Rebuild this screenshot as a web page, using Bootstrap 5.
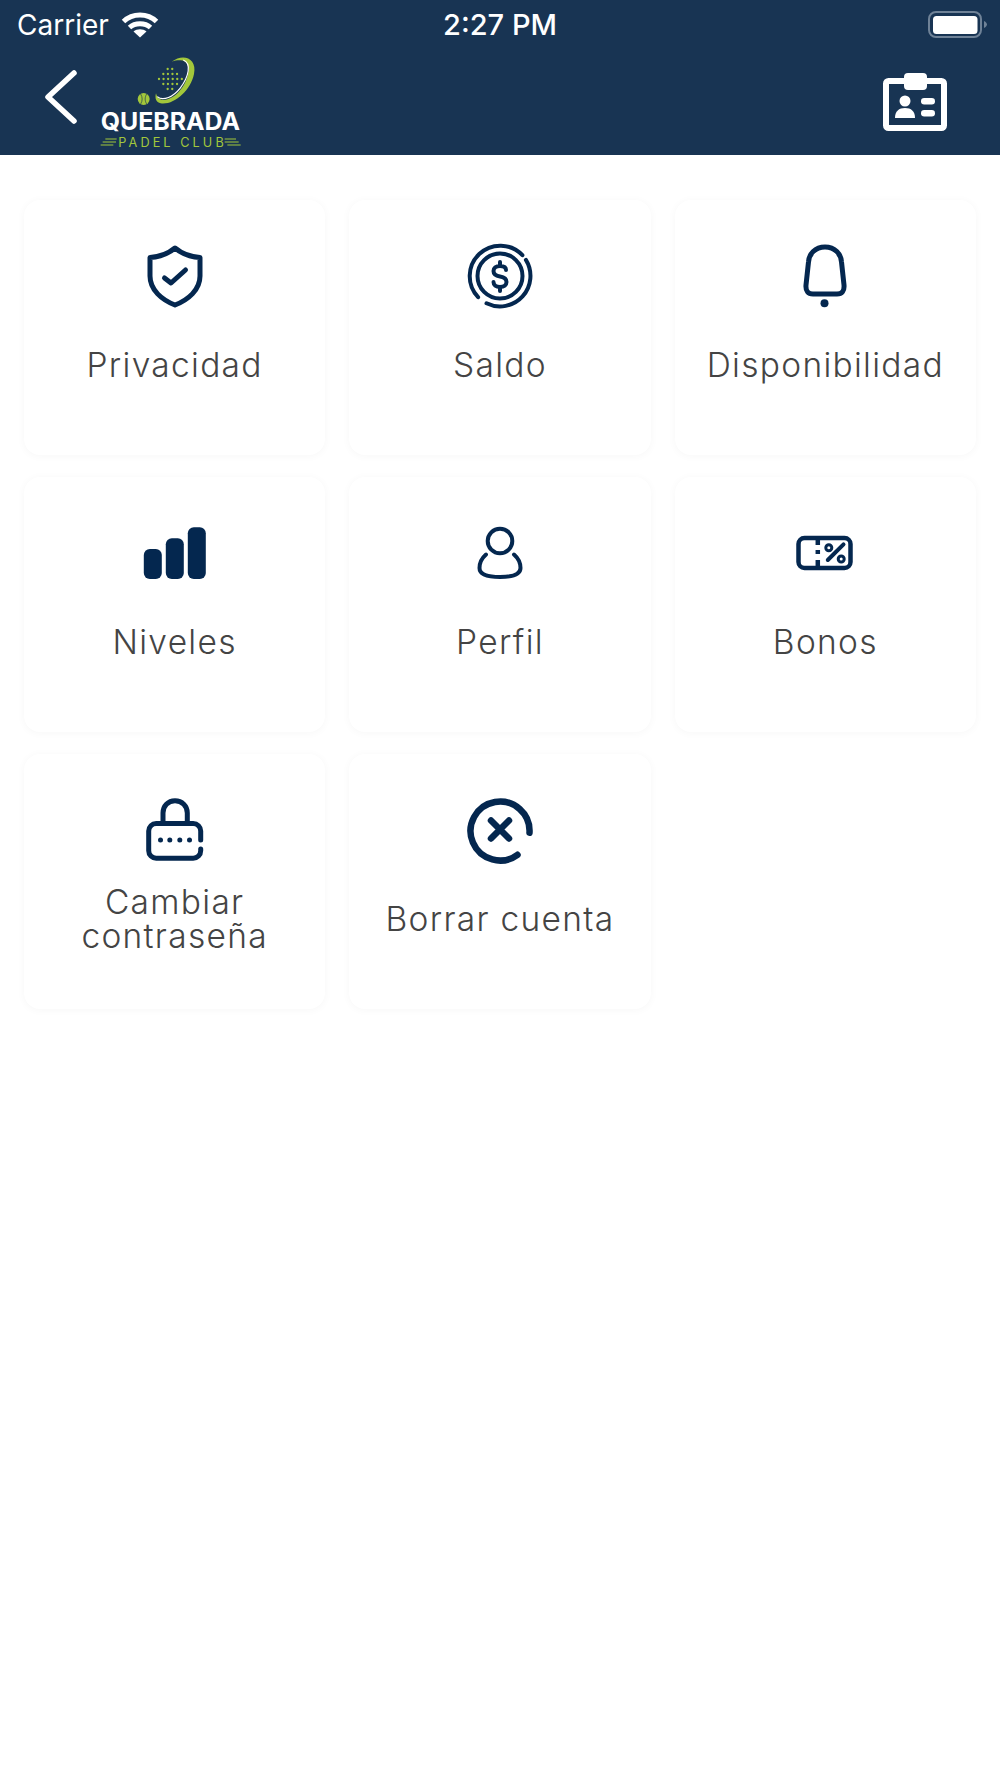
<!DOCTYPE html>
<html lang="es">
<head>
  <meta charset="UTF-8">
  <title>Quebrada Padel Club</title>
  <link href="https://cdn.jsdelivr.net/npm/bootstrap@5.3.0/dist/css/bootstrap.min.css" rel="stylesheet">
  <style>
    body {
      background: #fff;
      font-family: "Inter", "Liberation Sans", sans-serif;
    }

    .app-header {
      background: #183453;
      height: 155px;
      color: #fff;
    }

    .status-bar {
      height: 48px;
      padding: 2px 12px 0 17px;
      font-size: 28px;
    }

    .status-side {
      flex: 1 1 0;
    }

    .status-left {
      gap: 12px;
    }

    .status-time {
      margin-right: 5px;
      font-weight: 500;
      font-size: 29px;
    }

    .nav-bar {
      height: 107px;
      padding: 0 53px 0 40px;
    }

    .menu-grid {
      display: grid;
      grid-template-columns: repeat(3, 1fr);
      gap: 22px 24px;
      padding: 45px 24px;
    }

    .menu-tile {
      height: 255px;
      padding-top: 40px;
      background: #fff;
      border: 0;
      border-radius: 16px;
      box-shadow: 0 1px 8px rgba(0, 0, 0, .035);
    }

    .tile-icon {
      width: 80px;
      height: 70px;
      fill: none;
      stroke: #04274f;
      stroke-width: 5;
      stroke-linecap: round;
      stroke-linejoin: round;
    }

    .tile-icon-thin {
      stroke-width: 4;
    }

    .tile-label {
      height: 110px;
      padding: 0 10px;
      font-size: 33.5px;
      font-weight: 300;
      letter-spacing: 1.3px;
      line-height: 34px;
      color: #444;
    }
  </style>
</head>
<body>
  <header class="app-header">
    <div class="status-bar d-flex align-items-center">
      <div class="status-side status-left d-flex align-items-center">
        <span>Carrier</span>
        <svg width="38" height="26" viewBox="0 0 38 26" fill="none" stroke="#fff" stroke-width="5">
          <path d="M2.500 9.500C11.500 .8 26.500 .8 35.500 9.500"/>
          <path d="M8.500 15.500C14 10.500 24 10.500 29.500 15.500"/>
          <path d="M19 25.500L12.500 19.500C16 16.600 22 16.600 25.500 19.500Z" fill="#fff" stroke="none"/>
        </svg>
      </div>
      <div class="status-time">2:27 PM</div>
      <div class="status-side d-flex justify-content-end">
        <svg width="60" height="28" viewBox="0 0 60 28">
          <rect x="1" y="1" width="52" height="25" rx="7" fill="none" stroke="#6f8297" stroke-width="2"/>
          <rect x="5" y="5" width="44.500" height="18" rx="3.500" fill="#fff"/>
          <path d="M56 10C58 11 59 12.500 59 13.500S58 16 56 17Z" fill="#6f8297"/>
        </svg>
      </div>
    </div>
    <div class="nav-bar d-flex align-items-start">
      <svg width="40" height="105" viewBox="40 48 40 105" fill="none" stroke="#fff" stroke-width="5.500" stroke-linecap="round" stroke-linejoin="round">
        <path d="M74 73L48 97L74 121"/>
      </svg>
      <svg width="170" height="105" viewBox="0 -6 510 315">
        <path d="M275 35C310 8 352 25 342 72C332 122 282 166 242 160C228 158 224 145 228 130C232 150 250 155 270 145C305 130 330 80 325 50C320 30 300 27 275 35Z" fill="#a2c73b"/>
        <path d="M310 30C335 40 327 80 300 115C280 140 250 155 232 140" fill="none" stroke="#fff" stroke-width="3.500"/>
        <path d="M263 57H280M250 72H295M237 87H310M250 102H295M263 117H280" fill="none" stroke="#a2c73b" stroke-width="7" stroke-linecap="round" stroke-dasharray="0 13.700"/>
        <circle cx="191" cy="147" r="18" fill="#a2c73b"/>
        <path d="M182 132C188 142 188 152 182 162M200 132C194 142 194 152 200 162" fill="none" stroke="#183453" stroke-width="2"/>
        <text x="62" y="240" font-family="Inter, Liberation Sans, sans-serif" font-size="72" font-weight="700" fill="#fff" textLength="418" lengthAdjust="spacingAndGlyphs">QUEBRADA</text>
        <text x="115" y="290" font-family="Inter, Liberation Sans, sans-serif" font-size="38" font-weight="400" fill="#a2c73b" textLength="316">PADEL CLUB</text>
        <path d="M62 285H100M68 276H108M76 267H110M434 267H468M434 276H476M442 285H482" fill="none" stroke="#a2c73b" stroke-width="3.500"/>
      </svg>
      <svg class="ms-auto" width="64" height="105" viewBox="883 48 64 105">
        <rect x="886" y="81" width="58" height="47" rx="2.500" fill="none" stroke="#fff" stroke-width="6"/>
        <rect x="904" y="73" width="23" height="17" rx="4" fill="#fff"/>
        <circle cx="905" cy="101" r="5.500" fill="#fff"/>
        <path d="M895 118C895 111 899 108 905 108S915 111 915 118Z" fill="#fff"/>
        <rect x="921" y="98" width="14" height="6.500" rx="3.200" fill="#fff"/>
        <rect x="921" y="110" width="14" height="6.500" rx="3.200" fill="#fff"/>
      </svg>
    </div>
  </header>

  <main class="menu-grid">
    <div class="card menu-tile align-items-center text-center">
      <svg class="tile-icon" viewBox="0 0 80 70">
        <path d="M40 8C34 13 25 17 15 17.500V36C15 50 27 60 40 65C53 60 65 50 65 36V17.500C55 17 46 13 40 8Z"/>
        <path d="M29.500 38L36 43L50.500 30"/>
      </svg>
      <div class="tile-label d-flex align-items-center">Privacidad</div>
    </div>
    <div class="card menu-tile align-items-center text-center">
      <svg class="tile-icon tile-icon-thin" viewBox="0 0 80 70">
        <path d="M18.100 57.200A30.500 30.500 0 1 1 62.400 15.200"/>
        <path d="M65.900 19.900A30.500 30.500 0 0 1 26.500 63.300"/>
        <circle cx="40" cy="36" r="22.500"/>
        <path d="M46 30C46 27 43 26 40 26C36 26 33.500 28 33.500 31C33.500 35 37 36 40 36.500C43 37 46.500 38 46.500 42C46.500 45 44 47 40 47C36 47 33.500 45 33.500 42M40 22V26M40 47V51"/>
      </svg>
      <div class="tile-label d-flex align-items-center">Saldo</div>
    </div>
    <div class="card menu-tile align-items-center text-center">
      <svg class="tile-icon" viewBox="0 0 80 70">
        <path d="M40 7C30 7 24 14 23.500 22L21 45C20.500 51 23 54 28 54H52C57 54 59.500 51 59 45L56.500 22C56 14 50 7 40 7Z"/>
        <circle cx="39.500" cy="63.300" r="4" fill="#04274f" stroke="none"/>
      </svg>
      <div class="tile-label d-flex align-items-center">Disponibilidad</div>
    </div>

    <div class="card menu-tile align-items-center text-center">
      <svg class="tile-icon" viewBox="0 0 80 70">
        <g fill="#04274f" stroke="none">
          <rect x="8.800" y="32" width="18" height="30" rx="6"/>
          <rect x="30.800" y="21.300" width="18" height="40.700" rx="6"/>
          <rect x="52.800" y="10.300" width="18" height="51.700" rx="6"/>
        </g>
      </svg>
      <div class="tile-label d-flex align-items-center">Niveles</div>
    </div>
    <div class="card menu-tile align-items-center text-center">
      <svg class="tile-icon tile-icon-thin" viewBox="0 0 80 70">
        <circle cx="40" cy="24" r="12.300"/>
        <path d="M26 37.500C22 41 19.500 46 19.500 51C19.500 57 26 60 40 60S60.500 57 60.500 51C60.500 46 58 41 54 37.500"/>
      </svg>
      <div class="tile-label d-flex align-items-center">Perfil</div>
    </div>
    <div class="card menu-tile align-items-center text-center">
      <svg class="tile-icon" viewBox="0 0 80 70" style="stroke-width:4.500">
        <rect x="13.500" y="21" width="52" height="30" rx="6"/>
        <path d="M32.800 21V28M32.800 33V37M32.800 43V51" stroke-linecap="butt"/>
        <path d="M42.800 43L58.500 27.300" stroke-width="4"/>
        <circle cx="43.800" cy="30.700" r="3" stroke-width="3"/>
        <circle cx="56.200" cy="42" r="3" stroke-width="3"/>
      </svg>
      <div class="tile-label d-flex align-items-center">Bonos</div>
    </div>

    <div class="card menu-tile align-items-center text-center">
      <svg class="tile-icon" viewBox="0 0 80 70">
        <path d="M28 29V19C28 12 33 6.800 40 6.800S52.300 12 52.300 19V29"/>
        <path d="M65.700 46V37A7.500 7.500 0 0 0 58.200 29.500H21.200A7.500 7.500 0 0 0 13.700 37V56.700A7.500 7.500 0 0 0 21.200 64.200H58.200A7.500 7.500 0 0 0 65.700 56.700V55"/>
        <g fill="#04274f" stroke="none">
          <circle cx="25.500" cy="46" r="2.500"/>
          <circle cx="34.800" cy="46" r="2.500"/>
          <circle cx="44.800" cy="46" r="2.500"/>
          <circle cx="54.500" cy="46" r="2.500"/>
        </g>
      </svg>
      <div class="tile-label d-flex align-items-center">Cambiar<br>contraseña</div>
    </div>
    <div class="card menu-tile align-items-center text-center">
      <svg class="tile-icon" viewBox="0 0 80 70" style="stroke-width:6.500">
        <path d="M69.500 38.700A29.500 29.500 0 1 0 57.500 60.800"/>
        <path d="M31 26.500L49 44.500M49 26.500L31 44.500"/>
      </svg>
      <div class="tile-label d-flex align-items-center">Borrar cuenta</div>
    </div>
  </main>

  <script src="https://cdn.jsdelivr.net/npm/bootstrap@5.3.0/dist/js/bootstrap.bundle.min.js"></script>
</body>
</html>
